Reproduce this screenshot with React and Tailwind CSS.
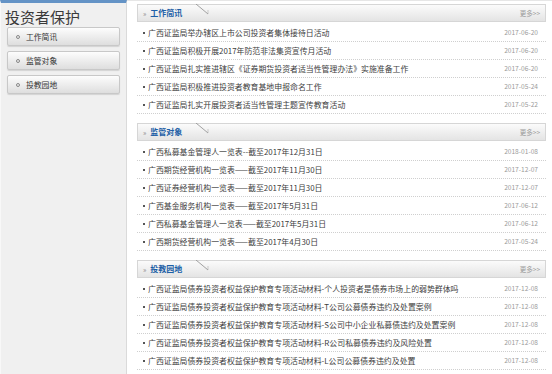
import React from "react";

const sections = [
  {
    title: "工作简讯",
    items: [
      ["广西证监局举办辖区上市公司投资者集体接待日活动", "2017-06-20"],
      ["广西证监局积极开展2017年防范非法集资宣传月活动", "2017-06-20"],
      ["广西证监局扎实推进辖区《证券期货投资者适当性管理办法》实施准备工作", "2017-06-20"],
      ["广西证监局积极推进投资者教育基地申报命名工作", "2017-05-24"],
      ["广西证监局扎实开展投资者适当性管理主题宣传教育活动", "2017-05-22"],
    ],
  },
  {
    title: "监管对象",
    items: [
      ["广西私募基金管理人一览表--截至2017年12月31日", "2018-01-08"],
      ["广西期货经营机构一览表——截至2017年11月30日", "2017-12-07"],
      ["广西证券经营机构一览表——截至2017年11月30日", "2017-12-07"],
      ["广西基金服务机构一览表——截至2017年5月31日", "2017-06-12"],
      ["广西私募基金管理人一览表——截至2017年5月31日", "2017-06-12"],
      ["广西期货经营机构一览表——截至2017年4月30日", "2017-05-24"],
    ],
  },
  {
    title: "投教园地",
    items: [
      ["广西证监局债券投资者权益保护教育专项活动材料-个人投资者是债券市场上的弱势群体吗", "2017-12-08"],
      ["广西证监局债券投资者权益保护教育专项活动材料-T公司公募债券违约及处置案例", "2017-12-08"],
      ["广西证监局债券投资者权益保护教育专项活动材料-S公司中小企业私募债违约及处置案例", "2017-12-08"],
      ["广西证监局债券投资者权益保护教育专项活动材料-R公司私募债券违约及风险处置", "2017-12-08"],
      ["广西证监局债券投资者权益保护教育专项活动材料-L公司公募债券违约及处置", "2017-12-08"],
    ],
  },
];

function Section({ title, items }) {
  return (
    <section className="flex flex-col">
      <div className="relative h-[18px] flex items-center justify-between border border-[#d6d6d6] bg-gradient-to-b from-[#fbfbfb] to-[#e4e4e4] pl-[5px] pr-[5px]">
        <div className="flex items-center gap-[4px]">
          <span className="text-[7px] text-[#8a8a8a] leading-none">»</span>
          <span className="text-[8px] font-bold text-[#1d5fa6] leading-none">{title}</span>
        </div>
        <span className="text-[6.5px] text-[#9a9a9a] leading-none">更多&gt;&gt;</span>
        <svg className="absolute left-[57px] top-[-1px]" width="14" height="11" viewBox="0 0 14 11">
          <path d="M1 0 L13 10" stroke="#8c8c8c" strokeWidth="0.8" fill="none" />
          <path d="M13 10 L13 6" stroke="#b0b0b0" strokeWidth="0.6" fill="none" />
        </svg>
      </div>
      <ul className="flex flex-col mt-[2px]">
        {items.map(([t, d], i) => (
          <li
            key={i}
            className="h-[18px] flex items-center justify-between border-b border-dotted border-[#cfcfcf] pl-[6px] pr-[8px]"
          >
            <span className="flex items-center gap-[3px] text-[7.9px] text-[#404040] leading-none whitespace-nowrap">
              <span className="w-[2px] h-[2px] bg-[#555] inline-block"></span>
              {t}
            </span>
            <span className="text-[6.6px] text-[#9a9a9a] leading-none">{d}</span>
          </li>
        ))}
      </ul>
    </section>
  );
}

export default function App() {
  const font = { fontFamily: '"Noto Sans CJK SC", "Noto Sans", sans-serif' };
  return (
    <div className="w-[552px] h-[374px] flex bg-white overflow-hidden" style={font}>
      <aside className="w-[127px] shrink-0 bg-[#f0f0f0] border-t-[3px] border-t-[#6493c6] border-l border-l-[#f8f8f8] border-r border-r-[#dadada] flex flex-col">
        <h1 className="text-[15px] text-[#3a3a3a] pl-[4px] pt-[5px] leading-[18px]">投资者保护</h1>
        <div className="flex flex-col gap-[5px] pl-[6px] pr-[6px] mt-[1px]">
          {["工作简讯", "监管对象", "投教园地"].map((b) => (
            <div
              key={b}
              className="h-[19px] flex items-center gap-[6px] pl-[8px] border border-[#c8c8c8] rounded-[2px] bg-gradient-to-b from-[#fdfdfd] to-[#dedede] shadow-[0_1px_1px_rgba(0,0,0,0.12)]"
            >
              <span className="w-[4px] h-[4px] rounded-full border border-[#888] inline-block"></span>
              <span className="text-[7.8px] text-[#333] leading-none">{b}</span>
            </div>
          ))}
        </div>
      </aside>
      <main className="flex-1 pl-[10px] pr-[6px] pt-[3px] flex flex-col gap-[9px] border-t border-[#e6e6e6]">
        {sections.map((s) => (
          <Section key={s.title} {...s} />
        ))}
      </main>
    </div>
  );
}
